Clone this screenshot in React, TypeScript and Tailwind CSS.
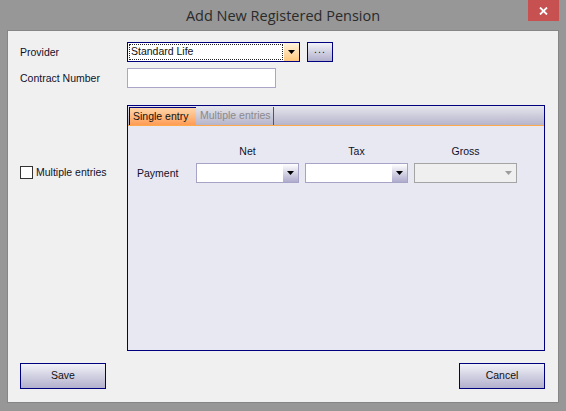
import React from 'react';

const label = 'text-[10.5px] text-[#10102a] leading-[13px]';

function Arrow({ color = '#000' }: { color?: string }) {
  return (
    <svg width="7" height="4" viewBox="0 0 7 4">
      <path d="M0 0H7L3.5 4Z" fill={color} />
    </svg>
  );
}

function Combo({ disabled }: { disabled?: boolean }) {
  if (disabled) {
    return (
      <div className="h-[20px] border border-[#a4a4a4] bg-[#efefef] flex justify-end items-center pr-[4px]">
        <Arrow color="#9c9c9c" />
      </div>
    );
  }
  return (
    <div className="h-[20px] border border-[#a7a3c6] bg-white flex">
      <div className="flex-1" />
      <div className="w-[15px] bg-gradient-to-b from-[#ffffff] to-[#aeaccc] flex items-center justify-center">
        <Arrow />
      </div>
    </div>
  );
}

function Button({ children, className }: { children: React.ReactNode; className?: string }) {
  return (
    <div
      className={`border border-[#00007f] bg-gradient-to-b from-[#f2f2f8] to-[#b2b0cc] flex items-center justify-center text-[10.5px] text-[#111] ${className}`}
    >
      {children}
    </div>
  );
}

export default function App() {
  return (
    <div
      className="w-[566px] h-[411px] bg-[#979797] flex flex-col px-[7px] pb-[8px]"
      style={{ fontFamily: '"Liberation Sans", Arial, sans-serif' }}
    >
      {/* title bar */}
      <div className="relative h-[30px] flex items-center justify-center">
        <span
          className="text-[14.5px] text-[#2a2a2a] pt-[1px]"
          style={{ fontFamily: '"Open Sans", "Noto Sans", sans-serif' }}
        >
          Add New Registered Pension
        </span>
        <div className="absolute top-0 right-0 w-[31px] h-[21px] bg-[#c75050] flex items-center justify-center">
          <svg width="9" height="8" viewBox="0 0 9 8">
            <path d="M1 0.5L8 7.5M8 0.5L1 7.5" stroke="#fff" strokeWidth="1.8" />
          </svg>
        </div>
      </div>

      {/* client area */}
      <div className="flex-1 border border-[#868686] bg-[#f0f0f0] pl-[12px] pt-[11px] flex flex-col">
        {/* provider */}
        <div className="flex items-center h-[20px]">
          <div className={`w-[107px] ${label}`}>Provider</div>
          <div className="w-[173px] h-[20px] border border-[#00007f] bg-white flex">
            <div className="flex-1 p-[1px]">
              <div className="h-full border border-dotted border-[#222] flex items-center pl-[1px] text-[10.5px] text-[#111]">
                Standard Life
              </div>
            </div>
            <div className="w-[15px] bg-gradient-to-b from-[#fff3dc] to-[#ffc77c] flex items-center justify-center">
              <Arrow />
            </div>
          </div>
          <Button className="ml-[7px] w-[26px] h-[20px]">
            <span className="pb-[4px] tracking-[1px]">...</span>
          </Button>
        </div>

        {/* contract number */}
        <div className="flex items-center h-[20px] mt-[6px]">
          <div className={`w-[107px] ${label}`}>Contract Number</div>
          <div className="w-[149px] h-[20px] border border-[#aba5c8] bg-white" />
        </div>

        {/* payments */}
        <div className="flex mt-[17px]">
          <div className="w-[107px]">
            <div className="mt-[61px] flex items-center gap-[3px]">
              <div className="w-[13px] h-[13px] border border-[#333] bg-white" />
              <span className={label}>Multiple entries</span>
            </div>
          </div>
          <div className="w-[418px] h-[246px] border border-[#00007f] bg-[#e8e8f2] flex flex-col">
            {/* tab strip */}
            <div className="h-[20px] bg-gradient-to-b from-[#e6e6ee] to-[#b6b4ca] flex items-end pl-[1px] border-b border-[#ffa84c]">
              <div className="h-[18px] w-[67px] border-l border-t border-[#00007f] bg-gradient-to-b from-[#ffd6a8] to-[#ff9c54] flex items-center pl-[3px] text-[10.5px] text-[#111]">
                Single entry
              </div>
              <div className="h-[18px] flex items-center pl-[4px] pr-[2px] text-[10.5px] text-[#8a8a8a] border-r border-[#555]">
                Multiple entries
              </div>
            </div>
            {/* content */}
            <div className="pl-[9px] pt-[19px] grid grid-cols-[53px_103px_103px_103px] gap-x-[6px] gap-y-[5px] items-center">
              <div />
              <div className={`${label} text-center`}>Net</div>
              <div className={`${label} text-center`}>Tax</div>
              <div className={`${label} text-center`}>Gross</div>
              <div className={label}>Payment</div>
              <Combo />
              <Combo />
              <Combo disabled />
            </div>
          </div>
        </div>

        {/* buttons */}
        <div className="flex justify-between mt-[12px] pr-[13px]">
          <Button className="w-[86px] h-[26px]">Save</Button>
          <Button className="w-[86px] h-[26px]">Cancel</Button>
        </div>
      </div>
    </div>
  );
}
